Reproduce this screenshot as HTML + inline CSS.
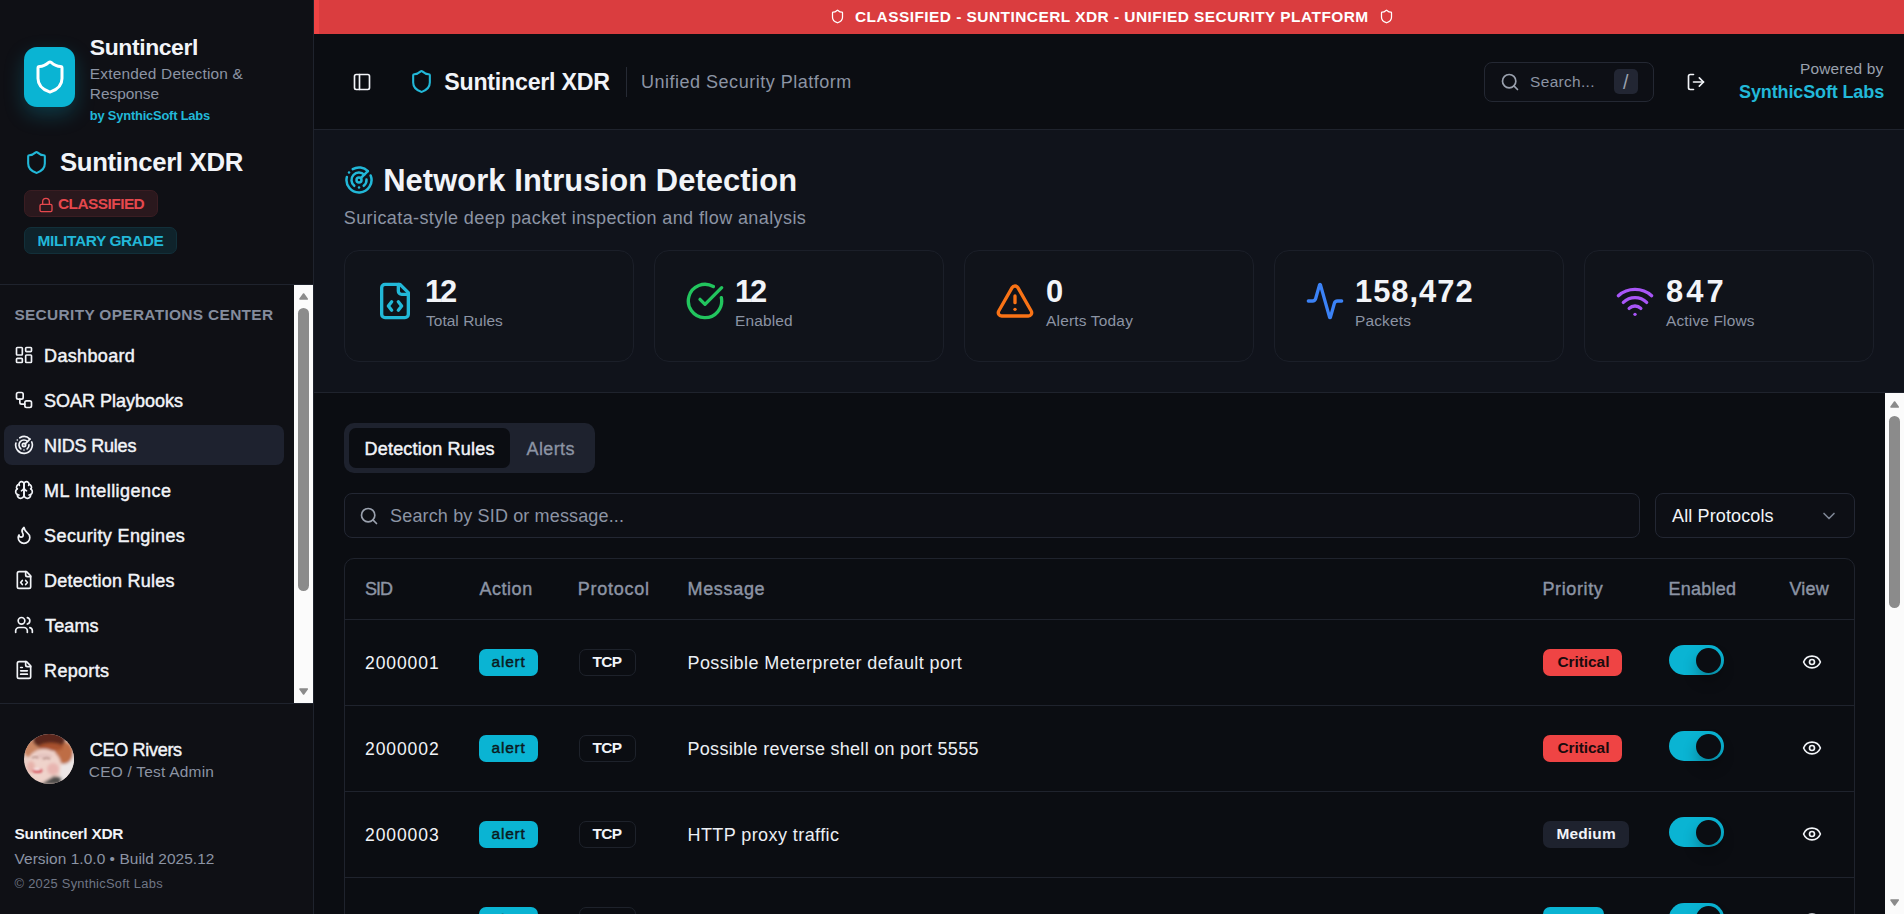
<!DOCTYPE html><html lang="en"><head><meta charset="utf-8"><title>Suntincerl XDR - Network Intrusion Detection</title><style>
*{margin:0;padding:0}
html,body{width:1904px;height:914px;overflow:hidden;background:#0b0d12}
body{position:relative;font-family:"Liberation Sans", Arial, sans-serif;color:#f2f4f8;-webkit-font-smoothing:antialiased}
.tx{position:absolute;white-space:nowrap;display:block;text-decoration:none;font-style:normal}
.ic{position:absolute;display:block}
.sidebar{position:absolute;left:0;top:0;width:313px;height:914px;background:#0f1015;border-right:1px solid #1f232d}
.banner{position:absolute;left:314px;top:0;width:1590px;height:34px;background:#da3d3f}
.topbar{position:absolute;left:314px;top:34px;width:1590px;height:95px;background:#0b0d12;border-bottom:1px solid #1f232d}
.pagehead{position:absolute;left:314px;top:130px;width:1590px;height:262px;background:#10131b;border-bottom:1px solid #1f232d}
.content{position:absolute;left:314px;top:393px;width:1590px;height:521px;background:#0b0d12;overflow:hidden}
.thumb{position:absolute;background:#8b8b8b;border-radius:6px}
</style></head><body><aside class="sidebar"><div style="position:absolute;left:24px;top:47px;width:51px;height:60px;background:#0ab4d3;border-radius:13px;box-shadow:0 8px 20px rgba(10,180,211,.25);"><svg class="ic" style="left:7.5px;top:12px;color:#fff;" width="36" height="36" viewBox="0 0 24 24" fill="none" stroke="currentColor" stroke-width="2" stroke-linecap="round" stroke-linejoin="round"><path d="M20 13c0 5-3.5 7.5-7.66 8.950a1 1 0 0 1-.67-.01C7.5 20.5 4 18 4 13V6a1 1 0 0 1 1-1c2 0 4.5-1.2 6.240-2.720a1.170 1.170 0 0 1 1.520 0C14.510 3.810 17 5 19 5a1 1 0 0 1 1 1z"/></svg></div><span class="tx" id="sb_title" style="left:89.80px;top:34.00px;font-size:22.95px;line-height:26px;font-weight:700;color:#f2f4f8;letter-spacing:-0.400px;">Suntincerl</span><span class="tx" id="sb_sub1" style="left:89.80px;top:65.00px;font-size:15.45px;line-height:17px;font-weight:400;color:#8c94a4;letter-spacing:0.200px;">Extended Detection &amp;</span><span class="tx" id="sb_sub2" style="left:89.80px;top:85.00px;font-size:15.45px;line-height:17px;font-weight:400;color:#8c94a4;letter-spacing:-0.029px;">Response</span><span class="tx" id="sb_by" style="left:89.80px;top:108.00px;font-size:12.88px;line-height:15px;font-weight:700;color:#22b8d8;letter-spacing:-0.189px;">by SynthicSoft Labs</span><svg class="ic" style="left:24px;top:150px;color:#22b8d8;" width="25" height="25" viewBox="0 0 24 24" fill="none" stroke="currentColor" stroke-width="2" stroke-linecap="round" stroke-linejoin="round"><path d="M20 13c0 5-3.5 7.5-7.66 8.950a1 1 0 0 1-.67-.01C7.5 20.5 4 18 4 13V6a1 1 0 0 1 1-1c2 0 4.5-1.2 6.240-2.720a1.170 1.170 0 0 1 1.520 0C14.510 3.810 17 5 19 5a1 1 0 0 1 1 1z"/></svg><h1 class="tx" id="sb_xdr" style="left:59.90px;top:148.00px;font-size:25.75px;line-height:28px;font-weight:700;color:#f2f4f8;letter-spacing:-0.308px;">Suntincerl XDR</h1><div style="position:absolute;left:24px;top:190px;width:134px;height:27px;background:#2a181d;border:1px solid #3a1d22;border-radius:7px;box-sizing:border-box;"><svg class="ic" style="left:12.6px;top:5.5px;color:#e5484d;" width="16" height="16" viewBox="0 0 24 24" fill="none" stroke="currentColor" stroke-width="2" stroke-linecap="round" stroke-linejoin="round"><rect width="18" height="11" x="3" y="11" rx="2" ry="2"/><path d="M7 11V7a5 5 0 0 1 10 0v4"/></svg></div><span class="tx" id="sb_cls" style="left:58.00px;top:195.00px;font-size:15.45px;line-height:17px;font-weight:700;color:#e5484d;letter-spacing:-0.556px;">CLASSIFIED</span><div style="position:absolute;left:24px;top:227px;width:153px;height:27px;background:#0f232b;border:1px solid #12303a;border-radius:7px;box-sizing:border-box;"></div><span class="tx" id="sb_mil" style="left:37.60px;top:232.00px;font-size:15.45px;line-height:17px;font-weight:700;color:#22b8d8;letter-spacing:-0.369px;">MILITARY GRADE</span><div style="position:absolute;left:0px;top:284px;width:313px;height:1px;background:#1f232d;"></div><nav><span class="tx" id="nav_h" style="left:14.40px;top:306.00px;font-size:15.45px;line-height:17px;font-weight:700;color:#848c9d;letter-spacing:0.320px;">SECURITY OPERATIONS CENTER</span><svg class="ic" style="left:14px;top:345px;color:#f2f4f8;" width="20" height="20" viewBox="0 0 24 24" fill="none" stroke="currentColor" stroke-width="2" stroke-linecap="round" stroke-linejoin="round"><rect width="7" height="9" x="3" y="3" rx="1"/><rect width="7" height="5" x="14" y="3" rx="1"/><rect width="7" height="9" x="14" y="12" rx="1"/><rect width="7" height="5" x="3" y="16" rx="1"/></svg><a class="tx" id="nav0" style="left:44.10px;top:346.00px;font-size:18.03px;line-height:20px;font-weight:400;color:#f2f4f8;letter-spacing:0.325px;-webkit-text-stroke:0.45px currentColor;">Dashboard</a><svg class="ic" style="left:14px;top:390px;color:#f2f4f8;" width="20" height="20" viewBox="0 0 24 24" fill="none" stroke="currentColor" stroke-width="2" stroke-linecap="round" stroke-linejoin="round"><rect width="8" height="8" x="3" y="3" rx="2"/><path d="M7 11v4a2 2 0 0 0 2 2h4"/><rect width="8" height="8" x="13" y="13" rx="2"/></svg><a class="tx" id="nav1" style="left:44.10px;top:391.00px;font-size:18.03px;line-height:20px;font-weight:400;color:#f2f4f8;letter-spacing:-0.015px;-webkit-text-stroke:0.45px currentColor;">SOAR Playbooks</a><div style="position:absolute;left:4px;top:425px;width:280px;height:40px;background:#1e222f;border-radius:8px;"></div><svg class="ic" style="left:14px;top:435px;color:#f2f4f8;" width="20" height="20" viewBox="0 0 24 24" fill="none" stroke="currentColor" stroke-width="2" stroke-linecap="round" stroke-linejoin="round"><path d="M19.070 4.930A10 10 0 0 0 6.990 3.340"/><path d="M4 6h.01"/><path d="M2.290 9.620A10 10 0 1 0 21.310 8.350"/><path d="M16.240 7.760A6 6 0 1 0 8.230 16.670"/><path d="M12 18h.01"/><path d="M17.990 11.660A6 6 0 0 1 15.770 16.670"/><circle cx="12" cy="12" r="2"/><path d="m13.410 10.590 5.660-5.660"/></svg><a class="tx" id="nav2" style="left:44.10px;top:436.00px;font-size:18.03px;line-height:20px;font-weight:400;color:#f2f4f8;letter-spacing:-0.200px;-webkit-text-stroke:0.45px currentColor;">NIDS Rules</a><svg class="ic" style="left:14px;top:480px;color:#f2f4f8;" width="20" height="20" viewBox="0 0 24 24" fill="none" stroke="currentColor" stroke-width="2" stroke-linecap="round" stroke-linejoin="round"><path d="M12 5a3 3 0 1 0-5.997.125 4 4 0 0 0-2.526 5.770 4 4 0 0 0 .556 6.588A4 4 0 1 0 12 18Z"/><path d="M12 5a3 3 0 1 1 5.997.125 4 4 0 0 1 2.526 5.770 4 4 0 0 1-.556 6.588A4 4 0 1 1 12 18Z"/><path d="M15 13a4.500 4.500 0 0 1-3-4 4.500 4.500 0 0 1-3 4"/><path d="M17.599 6.500a3 3 0 0 0 .399-1.375"/><path d="M6.003 5.125A3 3 0 0 0 6.401 6.500"/><path d="M3.477 10.896a4 4 0 0 1 .585-.396"/><path d="M19.938 10.500a4 4 0 0 1 .585.396"/><path d="M6 18a4 4 0 0 1-1.967-.516"/><path d="M19.967 17.484A4 4 0 0 1 18 18"/></svg><a class="tx" id="nav3" style="left:44.10px;top:481.00px;font-size:18.03px;line-height:20px;font-weight:400;color:#f2f4f8;letter-spacing:0.457px;-webkit-text-stroke:0.45px currentColor;">ML Intelligence</a><svg class="ic" style="left:14px;top:525px;color:#f2f4f8;" width="20" height="20" viewBox="0 0 24 24" fill="none" stroke="currentColor" stroke-width="2" stroke-linecap="round" stroke-linejoin="round"><path d="M8.500 14.500A2.500 2.500 0 0 0 11 12c0-1.380-.500-2-1-3-1.072-2.143-.224-4.054 2-6 .500 2.500 2 4.900 4 6.500 2 1.600 3 3.500 3 5.500a7 7 0 1 1-14 0c0-1.153.433-2.294 1-3a2.500 2.500 0 0 0 2.500 2.500z"/></svg><a class="tx" id="nav4" style="left:44.10px;top:526.00px;font-size:18.03px;line-height:20px;font-weight:400;color:#f2f4f8;letter-spacing:0.373px;-webkit-text-stroke:0.45px currentColor;">Security Engines</a><svg class="ic" style="left:14px;top:570px;color:#f2f4f8;" width="20" height="20" viewBox="0 0 24 24" fill="none" stroke="currentColor" stroke-width="2" stroke-linecap="round" stroke-linejoin="round"><path d="M10 12.500 8 15l2 2.500"/><path d="m14 12.500 2 2.500-2 2.500"/><path d="M14 2v4a2 2 0 0 0 2 2h4"/><path d="M15 2H6a2 2 0 0 0-2 2v16a2 2 0 0 0 2 2h12a2 2 0 0 0 2-2V7z"/></svg><a class="tx" id="nav5" style="left:44.10px;top:571.00px;font-size:18.03px;line-height:20px;font-weight:400;color:#f2f4f8;letter-spacing:0.229px;-webkit-text-stroke:0.45px currentColor;">Detection Rules</a><svg class="ic" style="left:14px;top:615px;color:#f2f4f8;" width="20" height="20" viewBox="0 0 24 24" fill="none" stroke="currentColor" stroke-width="2" stroke-linecap="round" stroke-linejoin="round"><path d="M16 21v-2a4 4 0 0 0-4-4H6a4 4 0 0 0-4 4v2"/><circle cx="9" cy="7" r="4"/><path d="M22 21v-2a4 4 0 0 0-3-3.870"/><path d="M16 3.130a4 4 0 0 1 0 7.750"/></svg><a class="tx" id="nav6" style="left:45.10px;top:616.00px;font-size:18.03px;line-height:20px;font-weight:400;color:#f2f4f8;letter-spacing:0.100px;-webkit-text-stroke:0.45px currentColor;">Teams</a><svg class="ic" style="left:14px;top:660px;color:#f2f4f8;" width="20" height="20" viewBox="0 0 24 24" fill="none" stroke="currentColor" stroke-width="2" stroke-linecap="round" stroke-linejoin="round"><path d="M15 2H6a2 2 0 0 0-2 2v16a2 2 0 0 0 2 2h12a2 2 0 0 0 2-2V7Z"/><path d="M14 2v4a2 2 0 0 0 2 2h4"/><path d="M10 9H8"/><path d="M16 13H8"/><path d="M16 17H8"/></svg><a class="tx" id="nav7" style="left:44.10px;top:661.00px;font-size:18.03px;line-height:20px;font-weight:400;color:#f2f4f8;letter-spacing:0.300px;-webkit-text-stroke:0.45px currentColor;">Reports</a></nav><div style="position:absolute;left:294px;top:285px;width:19px;height:418px;background:#fbfbfb;"><svg class="ic" style="left:4.900px;top:8px" width="9.200" height="7" viewBox="0 0 9.200 7"><path d="M1 6 L4.600 1 L8.200 6 Z" fill="#8b8b8b" stroke="#8b8b8b" stroke-width="1.600" stroke-linejoin="round"/></svg><div class="thumb" style="left:4px;top:23px;width:11px;height:283px"></div><svg class="ic" style="left:4.900px;top:403px" width="9.200" height="7" viewBox="0 0 9.200 7"><path d="M1 1 L4.600 6 L8.200 1 Z" fill="#8b8b8b" stroke="#8b8b8b" stroke-width="1.600" stroke-linejoin="round"/></svg></div><div style="position:absolute;left:0px;top:703px;width:313px;height:1px;background:#1f232d;"></div><div style="position:absolute;left:24px;top:734px;width:50px;height:50px;border-radius:50%;overflow:hidden;"><svg width="50" height="50" viewBox="0 0 50 50"><defs><filter id="avb" x="-20%" y="-20%" width="140%" height="140%"><feGaussianBlur stdDeviation="1.6"/></filter><filter id="avc"><feGaussianBlur stdDeviation="0.8"/></filter></defs>
<rect width="50" height="50" fill="#e9cfc6"/>
<g filter="url(#avb)">
<rect x="36" y="18" width="16" height="30" fill="#ece6e6"/>
<ellipse cx="8" cy="15" rx="9" ry="9" fill="#c98562"/>
<ellipse cx="40" cy="19" rx="9" ry="11" fill="#be6d45"/>
<ellipse cx="25" cy="6" rx="16" ry="9" fill="#5a281b"/>
<ellipse cx="27" cy="13" rx="12" ry="4" fill="#a8512d"/>
<ellipse cx="20" cy="31" rx="17" ry="16" fill="#efd3cb"/>
<ellipse cx="29" cy="35" rx="6" ry="6" fill="#e8b5b0"/>
<ellipse cx="7" cy="33" rx="4" ry="6" fill="#e7b3ab"/>
<ellipse cx="20" cy="22" rx="9" ry="3" fill="#e4c4bf"/>
<path d="M17 50 L30 42 L38 44 L36 50 Z" fill="#4f4d4b"/>
</g>
<g filter="url(#avc)"><ellipse cx="13.500" cy="36.500" rx="5" ry="2.600" fill="#d65a62"/><ellipse cx="13" cy="35.200" rx="3.600" ry="1.100" fill="#fbeeee"/>
<path d="M8 24q3-2 6 0M19 25q4-2 7 0" stroke="#9a7068" stroke-width="1.200" fill="none"/></g>
</svg></div><span class="tx" id="u_name" style="left:89.80px;top:740.00px;font-size:18.03px;line-height:20px;font-weight:400;color:#f2f4f8;letter-spacing:-0.311px;-webkit-text-stroke:0.45px currentColor;">CEO Rivers</span><span class="tx" id="u_role" style="left:88.80px;top:763.00px;font-size:15.45px;line-height:17px;font-weight:400;color:#8c94a4;letter-spacing:0.240px;">CEO / Test Admin</span><span class="tx" id="f_name" style="left:14.50px;top:825.00px;font-size:15.45px;line-height:17px;font-weight:700;color:#f2f4f8;letter-spacing:-0.262px;">Suntincerl XDR</span><span class="tx" id="f_ver" style="left:14.50px;top:850.00px;font-size:15.45px;line-height:17px;font-weight:400;color:#8c94a4;letter-spacing:0.050px;">Version 1.0.0 • Build 2025.12</span><span class="tx" id="f_copy" style="left:14.50px;top:876.00px;font-size:12.88px;line-height:15px;font-weight:400;color:#6f7685;letter-spacing:0.282px;">© 2025 SynthicSoft Labs</span></aside><div class="banner"><div style="position:absolute;left:0px;top:0px;width:5px;height:34px;background:#ef4444;"></div><svg class="ic" style="left:516px;top:9px;color:#fff;" width="15" height="15" viewBox="0 0 24 24" fill="none" stroke="currentColor" stroke-width="2" stroke-linecap="round" stroke-linejoin="round"><path d="M20 13c0 5-3.5 7.5-7.66 8.950a1 1 0 0 1-.67-.01C7.5 20.5 4 18 4 13V6a1 1 0 0 1 1-1c2 0 4.5-1.2 6.240-2.720a1.170 1.170 0 0 1 1.520 0C14.510 3.810 17 5 19 5a1 1 0 0 1 1 1z"/></svg><span class="tx" id="bn_t" style="left:541.00px;top:8.00px;font-size:15.45px;line-height:17px;font-weight:700;color:#fff;letter-spacing:0.467px;">CLASSIFIED - SUNTINCERL XDR - UNIFIED SECURITY PLATFORM</span><svg class="ic" style="left:1064.5px;top:9px;color:#fff;" width="15" height="15" viewBox="0 0 24 24" fill="none" stroke="currentColor" stroke-width="2" stroke-linecap="round" stroke-linejoin="round"><path d="M20 13c0 5-3.5 7.5-7.66 8.950a1 1 0 0 1-.67-.01C7.5 20.5 4 18 4 13V6a1 1 0 0 1 1-1c2 0 4.5-1.2 6.240-2.720a1.170 1.170 0 0 1 1.520 0C14.510 3.810 17 5 19 5a1 1 0 0 1 1 1z"/></svg></div><header class="topbar"><svg class="ic" style="left:38px;top:38px;color:#f2f4f8;" width="20" height="20" viewBox="0 0 24 24" fill="none" stroke="currentColor" stroke-width="2" stroke-linecap="round" stroke-linejoin="round"><rect width="18" height="18" x="3" y="3" rx="2"/><path d="M9 3v18"/></svg><svg class="ic" style="left:95px;top:35px;color:#22b8d8;" width="25" height="25" viewBox="0 0 24 24" fill="none" stroke="currentColor" stroke-width="2" stroke-linecap="round" stroke-linejoin="round"><path d="M20 13c0 5-3.5 7.5-7.66 8.950a1 1 0 0 1-.67-.01C7.5 20.5 4 18 4 13V6a1 1 0 0 1 1-1c2 0 4.5-1.2 6.240-2.720a1.170 1.170 0 0 1 1.520 0C14.510 3.810 17 5 19 5a1 1 0 0 1 1 1z"/></svg><span class="tx" id="tb_title" style="left:130.30px;top:35.00px;font-size:23.18px;line-height:26px;font-weight:700;color:#f2f4f8;letter-spacing:-0.231px;">Suntincerl XDR</span><div style="position:absolute;left:312px;top:33px;width:1px;height:30px;background:#262a34;"></div><span class="tx" id="tb_sub" style="left:327.00px;top:38.00px;font-size:18.03px;line-height:20px;font-weight:400;color:#8c94a4;letter-spacing:0.500px;">Unified Security Platform</span><div style="position:absolute;left:1170px;top:28px;width:170px;height:40px;border:1px solid #242833;border-radius:8px;box-sizing:border-box;background:#0d0f15;"></div><svg class="ic" style="left:1186px;top:38px;color:#9aa1ae;" width="20" height="20" viewBox="0 0 24 24" fill="none" stroke="currentColor" stroke-width="2" stroke-linecap="round" stroke-linejoin="round"><circle cx="11" cy="11" r="8"/><path d="m21 21-4.300-4.300"/></svg><span class="tx" id="tb_search" style="left:1216.10px;top:39.00px;font-size:15.45px;line-height:17px;font-weight:400;color:#8c94a4;letter-spacing:0.325px;">Search...</span><div style="position:absolute;left:1300px;top:35px;width:24px;height:25px;background:#222633;border-radius:5px;"></div><span class="tx" id="tb_slash" style="left:1308.90px;top:37.00px;font-size:19.57px;line-height:22px;font-weight:400;color:#9aa1ae;letter-spacing:0.000px;">/</span><svg class="ic" style="left:1371.5px;top:38px;color:#f2f4f8;" width="20" height="20" viewBox="0 0 24 24" fill="none" stroke="currentColor" stroke-width="2" stroke-linecap="round" stroke-linejoin="round"><path d="M9 21H5a2 2 0 0 1-2-2V5a2 2 0 0 1 2-2h4"/><polyline points="16 17 21 12 16 7"/><line x1="21" x2="9" y1="12" y2="12"/></svg><span class="tx" id="tb_pow" style="left:1485.90px;top:26.00px;font-size:15.45px;line-height:17px;font-weight:400;color:#9aa1ae;letter-spacing:0.200px;">Powered by</span><span class="tx" id="tb_syn" style="left:1425.00px;top:48.00px;font-size:18.03px;line-height:20px;font-weight:700;color:#22b8d8;letter-spacing:-0.133px;">SynthicSoft Labs</span></header><section class="pagehead"><svg class="ic" style="left:30px;top:35px;color:#22b8d8;" width="30" height="30" viewBox="0 0 24 24" fill="none" stroke="currentColor" stroke-width="2" stroke-linecap="round" stroke-linejoin="round"><path d="M19.070 4.930A10 10 0 0 0 6.990 3.340"/><path d="M4 6h.01"/><path d="M2.290 9.620A10 10 0 1 0 21.310 8.350"/><path d="M16.240 7.760A6 6 0 1 0 8.230 16.670"/><path d="M12 18h.01"/><path d="M17.990 11.660A6 6 0 0 1 15.770 16.670"/><circle cx="12" cy="12" r="2"/><path d="m13.410 10.590 5.660-5.660"/></svg><h2 class="tx" id="ph_title" style="left:69.20px;top:33.00px;font-size:30.9px;line-height:35px;font-weight:700;color:#f2f4f8;letter-spacing:0.077px;">Network Intrusion Detection</h2><span class="tx" id="ph_sub" style="left:29.80px;top:78.00px;font-size:18.03px;line-height:20px;font-weight:400;color:#8c94a4;letter-spacing:0.396px;">Suricata-style deep packet inspection and flow analysis</span><div style="position:absolute;left:30px;top:120px;width:290px;height:112px;border:1px solid #1b1f29;border-radius:15px;box-sizing:border-box;background:#10131a;"></div><svg class="ic" style="left:61px;top:151px;color:#22b8d8;" width="40" height="40" viewBox="0 0 24 24" fill="none" stroke="currentColor" stroke-width="2" stroke-linecap="round" stroke-linejoin="round"><path d="M10 12.500 8 15l2 2.500"/><path d="m14 12.500 2 2.500-2 2.500"/><path d="M14 2v4a2 2 0 0 0 2 2h4"/><path d="M15 2H6a2 2 0 0 0-2 2v16a2 2 0 0 0 2 2h12a2 2 0 0 0 2-2V7z"/></svg><span class="tx" id="c0v" style="left:111.00px;top:144.00px;font-size:30.9px;line-height:35px;font-weight:700;color:#f2f4f8;letter-spacing:-2.200px;">12</span><span class="tx" id="c0l" style="left:112.00px;top:182.00px;font-size:15.45px;line-height:17px;font-weight:400;color:#8c94a4;letter-spacing:0.040px;">Total Rules</span><div style="position:absolute;left:340px;top:120px;width:290px;height:112px;border:1px solid #1b1f29;border-radius:15px;box-sizing:border-box;background:#10131a;"></div><svg class="ic" style="left:371px;top:151px;color:#22c55e;" width="40" height="40" viewBox="0 0 24 24" fill="none" stroke="currentColor" stroke-width="2" stroke-linecap="round" stroke-linejoin="round"><path d="M21.801 10A10 10 0 1 1 17 3.335"/><path d="m9 11 3 3L22 4"/></svg><span class="tx" id="c1v" style="left:421.00px;top:144.00px;font-size:30.9px;line-height:35px;font-weight:700;color:#f2f4f8;letter-spacing:-2.200px;">12</span><span class="tx" id="c1l" style="left:421.00px;top:182.00px;font-size:15.45px;line-height:17px;font-weight:400;color:#8c94a4;letter-spacing:0.167px;">Enabled</span><div style="position:absolute;left:650px;top:120px;width:290px;height:112px;border:1px solid #1b1f29;border-radius:15px;box-sizing:border-box;background:#10131a;"></div><svg class="ic" style="left:681px;top:151px;color:#f97316;" width="40" height="40" viewBox="0 0 24 24" fill="none" stroke="currentColor" stroke-width="2" stroke-linecap="round" stroke-linejoin="round"><path d="m21.730 18-8-14a2 2 0 0 0-3.480 0l-8 14A2 2 0 0 0 4 21h16a2 2 0 0 0 1.730-3"/><path d="M12 9v4"/><path d="M12 17h.01"/></svg><span class="tx" id="c2v" style="left:732.00px;top:144.00px;font-size:30.9px;line-height:35px;font-weight:700;color:#f2f4f8;letter-spacing:0.000px;">0</span><span class="tx" id="c2l" style="left:732.00px;top:182.00px;font-size:15.45px;line-height:17px;font-weight:400;color:#8c94a4;letter-spacing:0.200px;">Alerts Today</span><div style="position:absolute;left:960px;top:120px;width:290px;height:112px;border:1px solid #1b1f29;border-radius:15px;box-sizing:border-box;background:#10131a;"></div><svg class="ic" style="left:991px;top:151px;color:#3b82f6;" width="40" height="40" viewBox="0 0 24 24" fill="none" stroke="currentColor" stroke-width="2" stroke-linecap="round" stroke-linejoin="round"><path d="M22 12h-2.480a2 2 0 0 0-1.930 1.460l-2.350 8.360a.250.250 0 0 1-.480 0L9.240 2.180a.250.250 0 0 0-.480 0l-2.350 8.360A2 2 0 0 1 4.490 12H2"/></svg><span class="tx" id="c3v" style="left:1041.00px;top:144.00px;font-size:30.9px;line-height:35px;font-weight:700;color:#f2f4f8;letter-spacing:1.000px;">158,472</span><span class="tx" id="c3l" style="left:1041.00px;top:182.00px;font-size:15.45px;line-height:17px;font-weight:400;color:#8c94a4;letter-spacing:0.167px;">Packets</span><div style="position:absolute;left:1270px;top:120px;width:290px;height:112px;border:1px solid #1b1f29;border-radius:15px;box-sizing:border-box;background:#10131a;"></div><svg class="ic" style="left:1301px;top:151px;color:#a855f7;" width="40" height="40" viewBox="0 0 24 24" fill="none" stroke="currentColor" stroke-width="2" stroke-linecap="round" stroke-linejoin="round"><path d="M12 20h.01"/><path d="M2 8.820a15 15 0 0 1 20 0"/><path d="M5 12.859a10 10 0 0 1 14 0"/><path d="M8.500 16.429a5 5 0 0 1 7 0"/></svg><span class="tx" id="c4v" style="left:1352.00px;top:144.00px;font-size:30.9px;line-height:35px;font-weight:700;color:#f2f4f8;letter-spacing:3.100px;">847</span><span class="tx" id="c4l" style="left:1352.00px;top:182.00px;font-size:15.45px;line-height:17px;font-weight:400;color:#8c94a4;letter-spacing:0.164px;">Active Flows</span></section><main class="content"><div style="position:absolute;left:30px;top:30px;width:251px;height:50px;background:#1e222e;border-radius:10px;"></div><div style="position:absolute;left:35px;top:35px;width:161px;height:40px;background:#0b0d12;border-radius:7px;"></div><span class="tx" id="tab1" style="left:50.50px;top:46.00px;font-size:18.03px;line-height:20px;font-weight:400;color:#f2f4f8;letter-spacing:0.200px;-webkit-text-stroke:0.45px currentColor;">Detection Rules</span><span class="tx" id="tab2" style="left:212.60px;top:46.00px;font-size:18.03px;line-height:20px;font-weight:400;color:#8c94a4;letter-spacing:0.360px;-webkit-text-stroke:0.3px currentColor;">Alerts</span><div style="position:absolute;left:30px;top:100px;width:1296px;height:45px;border:1px solid #232733;border-radius:8px;box-sizing:border-box;background:#0d0f15;"></div><svg class="ic" style="left:45px;top:113px;color:#9aa1ae;" width="20" height="20" viewBox="0 0 24 24" fill="none" stroke="currentColor" stroke-width="2" stroke-linecap="round" stroke-linejoin="round"><circle cx="11" cy="11" r="8"/><path d="m21 21-4.300-4.300"/></svg><span class="tx" id="srch" style="left:76.10px;top:113.00px;font-size:18.03px;line-height:20px;font-weight:400;color:#8c94a4;letter-spacing:0.138px;">Search by SID or message...</span><div style="position:absolute;left:1341px;top:100px;width:200px;height:45px;border:1px solid #232733;border-radius:8px;box-sizing:border-box;background:#0d0f15;"></div><span class="tx" id="sel" style="left:1358.10px;top:113.00px;font-size:18.03px;line-height:20px;font-weight:400;color:#f2f4f8;letter-spacing:0.117px;">All Protocols</span><svg class="ic" style="left:1505px;top:113px;color:#7d8594;" width="20" height="20" viewBox="0 0 24 24" fill="none" stroke="currentColor" stroke-width="2" stroke-linecap="round" stroke-linejoin="round"><path d="m6 9 6 6 6-6"/></svg><div style="position:absolute;left:30px;top:165px;width:1511px;height:380px;border:1px solid #1f232d;border-radius:10px;box-sizing:border-box;"></div><span class="tx" id="th0" style="left:51.10px;top:186.00px;font-size:18.03px;line-height:20px;font-weight:400;color:#8c94a4;letter-spacing:-1.100px;-webkit-text-stroke:0.4px currentColor;">SID</span><span class="tx" id="th1" style="left:165.50px;top:186.00px;font-size:18.03px;line-height:20px;font-weight:400;color:#8c94a4;letter-spacing:0.520px;-webkit-text-stroke:0.4px currentColor;">Action</span><span class="tx" id="th2" style="left:263.70px;top:186.00px;font-size:18.03px;line-height:20px;font-weight:400;color:#8c94a4;letter-spacing:0.743px;-webkit-text-stroke:0.4px currentColor;">Protocol</span><span class="tx" id="th3" style="left:373.50px;top:186.00px;font-size:18.03px;line-height:20px;font-weight:400;color:#8c94a4;letter-spacing:0.667px;-webkit-text-stroke:0.4px currentColor;">Message</span><span class="tx" id="th4" style="left:1228.50px;top:186.00px;font-size:18.03px;line-height:20px;font-weight:400;color:#8c94a4;letter-spacing:0.600px;-webkit-text-stroke:0.4px currentColor;">Priority</span><span class="tx" id="th5" style="left:1354.60px;top:186.00px;font-size:18.03px;line-height:20px;font-weight:400;color:#8c94a4;letter-spacing:0.200px;-webkit-text-stroke:0.4px currentColor;">Enabled</span><span class="tx" id="th6" style="left:1475.40px;top:186.00px;font-size:18.03px;line-height:20px;font-weight:400;color:#8c94a4;letter-spacing:0.200px;-webkit-text-stroke:0.4px currentColor;">View</span><div style="position:absolute;left:31px;top:226px;width:1509px;height:1px;background:#1f232d;"></div><span class="tx" id="r0sid" style="left:51.10px;top:260.00px;font-size:17.5px;line-height:20px;font-weight:400;color:#f2f4f8;letter-spacing:0.900px;font-family:"Liberation Mono", monospace;-webkit-text-stroke:0.35px currentColor;">2000001</span><div style="position:absolute;left:165px;top:256px;width:59px;height:27px;background:#0ab4d3;border-radius:7px;"></div><span class="tx" id="r0act" style="left:177.60px;top:260.00px;font-size:15.45px;line-height:17px;font-weight:400;color:#0a1a20;letter-spacing:0.800px;-webkit-text-stroke:0.45px currentColor;">alert</span><div style="position:absolute;left:265px;top:256px;width:57px;height:27px;border:1px solid #1e222b;border-radius:7px;box-sizing:border-box;"></div><span class="tx" id="r0pro" style="left:278.40px;top:260.00px;font-size:15.45px;line-height:17px;font-weight:700;color:#f2f4f8;letter-spacing:-0.600px;">TCP</span><span class="tx" id="r0msg" style="left:373.50px;top:260.00px;font-size:18.03px;line-height:20px;font-weight:400;color:#eceff4;letter-spacing:0.406px;">Possible Meterpreter default port</span><div style="position:absolute;left:1229px;top:256px;width:79px;height:27px;background:#ef4444;border-radius:7px;"></div><span class="tx" id="r0pri" style="left:1243.50px;top:260.00px;font-size:15.45px;line-height:17px;font-weight:700;color:#1a0b0d;letter-spacing:-0.057px;">Critical</span><div style="position:absolute;left:1355px;top:252px;width:55px;height:30px;background:#0ab4d3;border-radius:15px;"><i style="position:absolute;left:27px;top:2.5px;width:25px;height:25px;border-radius:50%;background:#0b0d12;box-shadow:0 8px 14px rgba(0,0,0,.28)"></i></div><svg class="ic" style="left:1488px;top:259px;color:#f2f4f8;" width="20" height="20" viewBox="0 0 24 24" fill="none" stroke="currentColor" stroke-width="2" stroke-linecap="round" stroke-linejoin="round"><path d="M2.062 12.348a1 1 0 0 1 0-.696 10.750 10.750 0 0 1 19.876 0 1 1 0 0 1 0 .696 10.750 10.750 0 0 1-19.876 0"/><circle cx="12" cy="12" r="3"/></svg><div style="position:absolute;left:31px;top:312px;width:1509px;height:1px;background:#1f232d;"></div><span class="tx" id="r1sid" style="left:51.10px;top:346.00px;font-size:17.5px;line-height:20px;font-weight:400;color:#f2f4f8;letter-spacing:0.900px;font-family:"Liberation Mono", monospace;-webkit-text-stroke:0.35px currentColor;">2000002</span><div style="position:absolute;left:165px;top:342px;width:59px;height:27px;background:#0ab4d3;border-radius:7px;"></div><span class="tx" id="r1act" style="left:177.60px;top:346.00px;font-size:15.45px;line-height:17px;font-weight:400;color:#0a1a20;letter-spacing:0.800px;-webkit-text-stroke:0.45px currentColor;">alert</span><div style="position:absolute;left:265px;top:342px;width:57px;height:27px;border:1px solid #1e222b;border-radius:7px;box-sizing:border-box;"></div><span class="tx" id="r1pro" style="left:278.40px;top:346.00px;font-size:15.45px;line-height:17px;font-weight:700;color:#f2f4f8;letter-spacing:-0.600px;">TCP</span><span class="tx" id="r1msg" style="left:373.50px;top:346.00px;font-size:18.03px;line-height:20px;font-weight:400;color:#eceff4;letter-spacing:0.282px;">Possible reverse shell on port 5555</span><div style="position:absolute;left:1229px;top:342px;width:79px;height:27px;background:#ef4444;border-radius:7px;"></div><span class="tx" id="r1pri" style="left:1243.50px;top:346.00px;font-size:15.45px;line-height:17px;font-weight:700;color:#1a0b0d;letter-spacing:-0.057px;">Critical</span><div style="position:absolute;left:1355px;top:338px;width:55px;height:30px;background:#0ab4d3;border-radius:15px;"><i style="position:absolute;left:27px;top:2.5px;width:25px;height:25px;border-radius:50%;background:#0b0d12;box-shadow:0 8px 14px rgba(0,0,0,.28)"></i></div><svg class="ic" style="left:1488px;top:345px;color:#f2f4f8;" width="20" height="20" viewBox="0 0 24 24" fill="none" stroke="currentColor" stroke-width="2" stroke-linecap="round" stroke-linejoin="round"><path d="M2.062 12.348a1 1 0 0 1 0-.696 10.750 10.750 0 0 1 19.876 0 1 1 0 0 1 0 .696 10.750 10.750 0 0 1-19.876 0"/><circle cx="12" cy="12" r="3"/></svg><div style="position:absolute;left:31px;top:398px;width:1509px;height:1px;background:#1f232d;"></div><span class="tx" id="r2sid" style="left:51.10px;top:432.00px;font-size:17.5px;line-height:20px;font-weight:400;color:#f2f4f8;letter-spacing:0.900px;font-family:"Liberation Mono", monospace;-webkit-text-stroke:0.35px currentColor;">2000003</span><div style="position:absolute;left:165px;top:428px;width:59px;height:27px;background:#0ab4d3;border-radius:7px;"></div><span class="tx" id="r2act" style="left:177.60px;top:432.00px;font-size:15.45px;line-height:17px;font-weight:400;color:#0a1a20;letter-spacing:0.800px;-webkit-text-stroke:0.45px currentColor;">alert</span><div style="position:absolute;left:265px;top:428px;width:57px;height:27px;border:1px solid #1e222b;border-radius:7px;box-sizing:border-box;"></div><span class="tx" id="r2pro" style="left:278.40px;top:432.00px;font-size:15.45px;line-height:17px;font-weight:700;color:#f2f4f8;letter-spacing:-0.600px;">TCP</span><span class="tx" id="r2msg" style="left:373.50px;top:432.00px;font-size:18.03px;line-height:20px;font-weight:400;color:#eceff4;letter-spacing:0.412px;">HTTP proxy traffic</span><div style="position:absolute;left:1229px;top:428px;width:86px;height:27px;background:#1e222e;border-radius:7px;"></div><span class="tx" id="r2pri" style="left:1242.40px;top:432.00px;font-size:15.45px;line-height:17px;font-weight:700;color:#f2f4f8;letter-spacing:0.200px;">Medium</span><div style="position:absolute;left:1355px;top:424px;width:55px;height:30px;background:#0ab4d3;border-radius:15px;"><i style="position:absolute;left:27px;top:2.5px;width:25px;height:25px;border-radius:50%;background:#0b0d12;box-shadow:0 8px 14px rgba(0,0,0,.28)"></i></div><svg class="ic" style="left:1488px;top:431px;color:#f2f4f8;" width="20" height="20" viewBox="0 0 24 24" fill="none" stroke="currentColor" stroke-width="2" stroke-linecap="round" stroke-linejoin="round"><path d="M2.062 12.348a1 1 0 0 1 0-.696 10.750 10.750 0 0 1 19.876 0 1 1 0 0 1 0 .696 10.750 10.750 0 0 1-19.876 0"/><circle cx="12" cy="12" r="3"/></svg><div style="position:absolute;left:31px;top:484px;width:1509px;height:1px;background:#1f232d;"></div><span class="tx" id="r3sid" style="left:51.10px;top:518.00px;font-size:17.5px;line-height:20px;font-weight:400;color:#f2f4f8;letter-spacing:0.900px;font-family:"Liberation Mono", monospace;-webkit-text-stroke:0.35px currentColor;">2000004</span><div style="position:absolute;left:165px;top:514px;width:59px;height:27px;background:#0ab4d3;border-radius:7px;"></div><span class="tx" id="r3act" style="left:177.60px;top:518.00px;font-size:15.45px;line-height:17px;font-weight:400;color:#0a1a20;letter-spacing:0.800px;-webkit-text-stroke:0.45px currentColor;">alert</span><div style="position:absolute;left:265px;top:514px;width:57px;height:27px;border:1px solid #1e222b;border-radius:7px;box-sizing:border-box;"></div><span class="tx" id="r3pro" style="left:278.40px;top:518.00px;font-size:15.45px;line-height:17px;font-weight:700;color:#f2f4f8;letter-spacing:-0.600px;">TCP</span><span class="tx" id="r3msg" style="left:373.50px;top:518.00px;font-size:18.03px;line-height:20px;font-weight:400;color:#eceff4;letter-spacing:0.406px;">Possible SSH brute force attempt</span><div style="position:absolute;left:1229px;top:514px;width:61px;height:27px;background:#0ab4d3;border-radius:7px;"></div><span class="tx" id="r3pri" style="left:1242.40px;top:518.00px;font-size:15.45px;line-height:17px;font-weight:700;color:#0a1a20;letter-spacing:-0.057px;">High</span><div style="position:absolute;left:1355px;top:510px;width:55px;height:30px;background:#0ab4d3;border-radius:15px;"><i style="position:absolute;left:27px;top:2.5px;width:25px;height:25px;border-radius:50%;background:#0b0d12;box-shadow:0 8px 14px rgba(0,0,0,.28)"></i></div><svg class="ic" style="left:1488px;top:517px;color:#f2f4f8;" width="20" height="20" viewBox="0 0 24 24" fill="none" stroke="currentColor" stroke-width="2" stroke-linecap="round" stroke-linejoin="round"><path d="M2.062 12.348a1 1 0 0 1 0-.696 10.750 10.750 0 0 1 19.876 0 1 1 0 0 1 0 .696 10.750 10.750 0 0 1-19.876 0"/><circle cx="12" cy="12" r="3"/></svg><div style="position:absolute;left:1571px;top:0px;width:19px;height:521px;background:#fbfbfb;"><svg class="ic" style="left:4.900px;top:8px" width="9.200" height="7" viewBox="0 0 9.200 7"><path d="M1 6 L4.600 1 L8.200 6 Z" fill="#8b8b8b" stroke="#8b8b8b" stroke-width="1.600" stroke-linejoin="round"/></svg><div class="thumb" style="left:4px;top:23px;width:11px;height:192px"></div><svg class="ic" style="left:4.900px;top:506px" width="9.200" height="7" viewBox="0 0 9.200 7"><path d="M1 1 L4.600 6 L8.200 1 Z" fill="#8b8b8b" stroke="#8b8b8b" stroke-width="1.600" stroke-linejoin="round"/></svg></div></main></body></html>
